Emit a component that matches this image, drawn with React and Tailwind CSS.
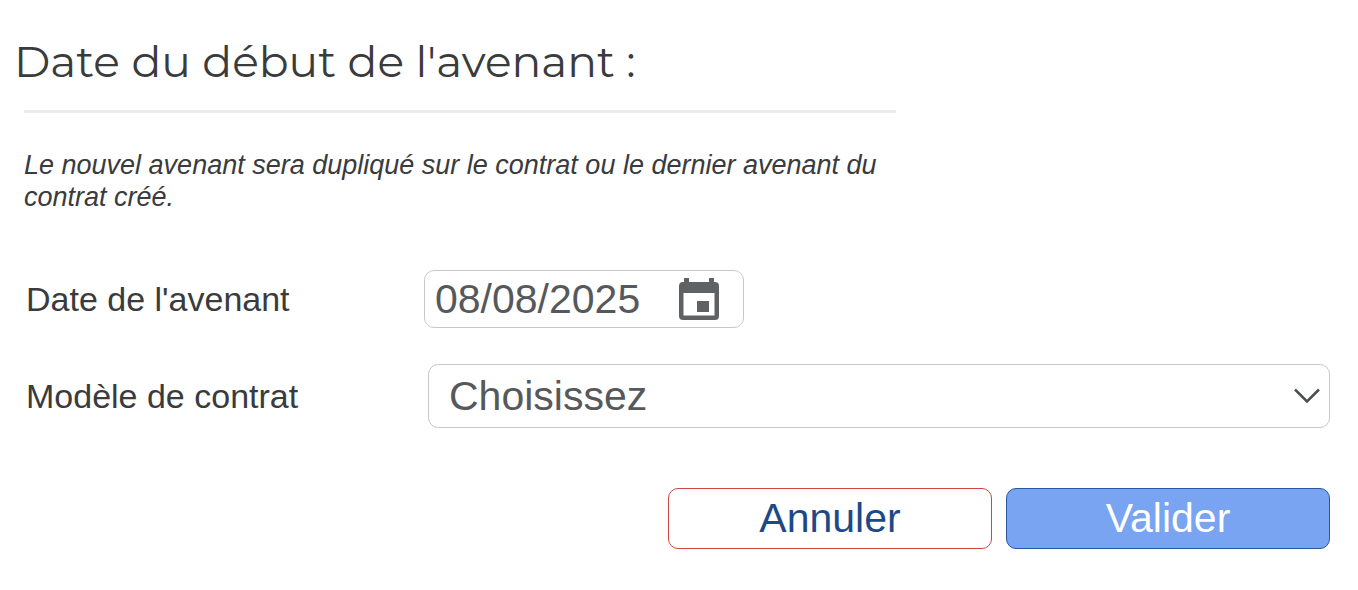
import { useState } from "react";

function CalendarIcon() {
  return (
    <svg viewBox="0 0 40 42" className="w-10 h-[42px]" fill="#5f6265" aria-hidden="true">
      <path
        fillRule="evenodd"
        d="M5 0h5v4h20V0h5v4h1a4 4 0 0 1 4 4v30a4 4 0 0 1-4 4H4a4 4 0 0 1-4-4V8a4 4 0 0 1 4-4h1zM4.500 15v22.500h31V15z"
      />
      <rect x="18" y="23" width="12" height="11" />
    </svg>
  );
}

function App() {
  const [date, setDate] = useState("08/08/2025");
  const [modele, setModele] = useState("");

  const handleSubmit = (e) => {
    e.preventDefault();
  };

  return (
    <main className="bg-white pl-6 pr-7 pt-8 pb-10 font-['Liberation_Sans',Arial,sans-serif] text-[#393b3d]">
      <h1 className="-ml-2.5 text-[44px] leading-[58px] font-['Montserrat','Inter',sans-serif]">
        Date du début de l'avenant :
      </h1>
      <hr className="mt-5 max-w-[872px] border-t-[3px] border-[#ededed]" />
      <p className="mt-9 max-w-[872px] text-[27px] leading-8 italic">
        Le nouvel avenant sera dupliqué sur le contrat ou le dernier avenant du contrat créé.
      </p>

      <form onSubmit={handleSubmit} className="mt-[57px]">
        <div className="flex items-center">
          <label htmlFor="date" className="w-[400px] shrink-0 pl-0.5 text-[34px] leading-10">
            Date de l'avenant
          </label>
          <div className="flex h-[58px] w-80 items-center rounded-[10px] border border-[#c8c8c8] pl-2.5 pr-6">
            <input
              type="text"
              id="date"
              value={date}
              onChange={(e) => setDate(e.target.value)}
              className="min-w-0 flex-1 text-[41px] leading-[48px] text-[#56595c] outline-none"
            />
            <button type="button" aria-label="Ouvrir le calendrier">
              <CalendarIcon />
            </button>
          </div>
        </div>

        <div className="mt-9 flex items-center">
          <label htmlFor="modele" className="w-[404px] shrink-0 pl-0.5 text-[34px] leading-10">
            Modèle de contrat
          </label>
          <div className="relative flex-1">
            <select
              id="modele"
              value={modele}
              onChange={(e) => setModele(e.target.value)}
              className="block h-16 w-full appearance-none rounded-[10px] border border-[#c8c8c8] bg-white pl-5 pr-12 text-[41px] leading-[48px] text-[#56595c]"
            >
              <option value="">Choisissez</option>
            </select>
            <svg
              viewBox="0 0 26 16"
              className="pointer-events-none absolute right-2.5 top-6 h-4 w-[26px]"
              fill="none"
              stroke="#4c4f52"
              strokeWidth="2.500"
              aria-hidden="true"
            >
              <path d="M1 1.500 13 13.500 25 1.500" />
            </svg>
          </div>
        </div>

        <div className="mt-[60px] flex justify-end gap-3.5">
          <button
            type="button"
            className="h-[61px] w-[324px] rounded-[10px] border border-[#cc4642] bg-white pb-0.5 text-[41px] leading-[48px] text-[#1d4a87]"
          >
            Annuler
          </button>
          <button
            type="submit"
            className="h-[61px] w-[324px] rounded-[10px] border border-[#2858a0] bg-[#78a4f1] pb-0.5 text-[41px] leading-[48px] text-white"
          >
            Valider
          </button>
        </div>
      </form>
    </main>
  );
}

export default App;
